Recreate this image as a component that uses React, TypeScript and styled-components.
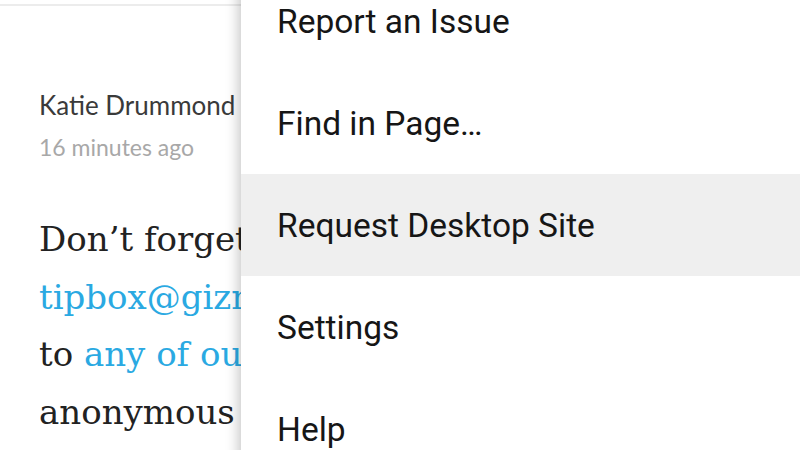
import styled, { createGlobalStyle } from 'styled-components';

const GlobalStyle = createGlobalStyle`
  html, body {
    margin: 0;
    padding: 0;
    background: #ffffff;
  }

  body {
    width: 800px;
    height: 450px;
    overflow: hidden;
  }
`;

const menuItems = [
  'Report an Issue',
  'Find in Page…',
  'Request Desktop Site',
  'Settings',
  'Help',
];

export default function App() {
  return (
    <>
      <GlobalStyle />
      <Screen>
        <TopBar />
        <Article>
          <Byline>
            <Author>Katie Drummond</Author>
            <Time>16 minutes ago</Time>
          </Byline>
          <Body>
            Don’t forget to send us tips at
            <br />
            <Link>tipbox@gizmodo.com</Link>, or reach out
            <br />
            to <Link>any of our reporters</Link> for
            <br />
            anonymous tips.
          </Body>
        </Article>
        <Menu>
          {menuItems.map((item) => (
            <MenuItem key={item} $active={item === 'Request Desktop Site'}>
              {item}
            </MenuItem>
          ))}
        </Menu>
      </Screen>
    </>
  );
}

const Screen = styled.div`
  position: relative;
  width: 800px;
  height: 450px;
  overflow: hidden;
  background: #ffffff;
`;

const TopBar = styled.div`
  height: 4px;
  border-bottom: 2px solid #ececec;
`;

const Article = styled.div`
  padding: 0 0 0 39px;
`;

const Byline = styled.div`
  display: flex;
  flex-direction: column;
  gap: 8px;
  padding-top: 82px;
`;

const Author = styled.div`
  font-family: Lato, 'Open Sans', sans-serif;
  font-size: 26px;
  line-height: 34px;
  color: #3a3a3a;
  white-space: nowrap;
`;

const Time = styled.div`
  font-family: Lato, 'Open Sans', sans-serif;
  font-size: 23px;
  line-height: 34px;
  color: #a8a8a8;
  white-space: nowrap;
`;

const Body = styled.p`
  margin: 47px 0 0;
  font-family: 'DejaVu Serif', serif;
  font-size: 34px;
  line-height: 57.5px;
  color: #222222;
  white-space: nowrap;
`;

const Link = styled.span`
  color: #2aa9e2;
`;

const Menu = styled.div`
  position: absolute;
  top: -30px;
  right: 0;
  width: 559px;
  display: flex;
  flex-direction: column;
  background: #ffffff;
  box-shadow: -3px 0 12px rgba(0, 0, 0, 0.22);
`;

const MenuItem = styled.div<{ $active?: boolean }>`
  display: flex;
  align-items: center;
  height: 102px;
  padding-left: 36px;
  font-family: Roboto, 'Liberation Sans', sans-serif;
  font-size: 33.5px;
  color: #161616;
  background: ${({ $active }) => ($active ? '#efefef' : '#ffffff')};
`;
